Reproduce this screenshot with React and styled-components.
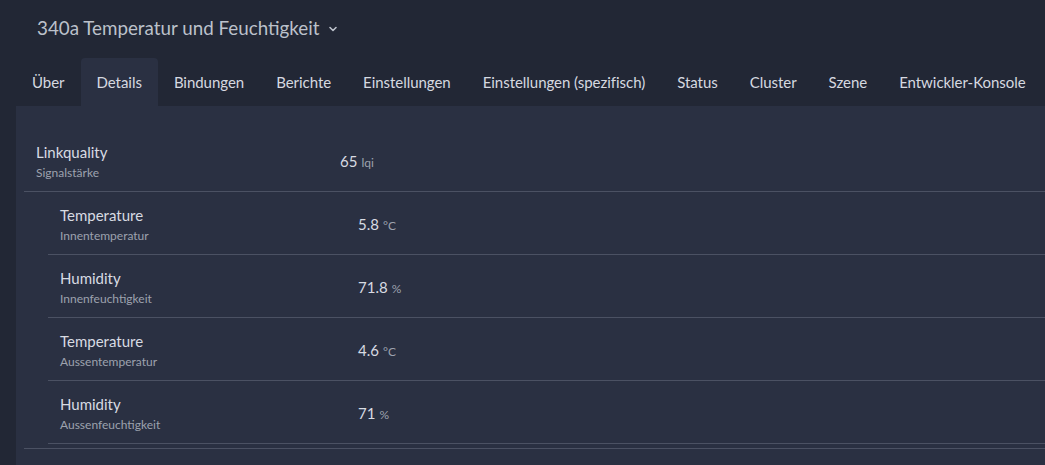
import styled, { createGlobalStyle } from "styled-components";

const GlobalStyle = createGlobalStyle`
  html, body {
    margin: 0;
    padding: 0;
    background: #222735;
    font-family: Lato, "Noto Sans", sans-serif;
    overflow: hidden;
  }
`;

const Page = styled.div`
  width: 1045px;
  height: 465px;
  background: #222735;
  color: #d3d6dd;
`;

const Header = styled.div`
  height: 58px;
  display: flex;
  align-items: center;
  padding-left: 37px;
  gap: 8px;
  box-sizing: border-box;
  padding-bottom: 4px;
`;

const Title = styled.h1`
  margin: 0;
  font-size: 18.8px;
  font-weight: 400;
  color: #bcc1cb;
`;

const Tabs = styled.div`
  display: flex;
  padding-left: 16px;
  height: 48px;
`;

const Tab = styled.div`
  padding: 0 16px;
  display: flex;
  align-items: center;
  font-size: 15px;
  letter-spacing: -0.04px;
  color: #d6d9e0;
  border-radius: 4px 4px 0 0;
  background: ${(p) => (p.active ? "#2a3042" : "transparent")};
  white-space: nowrap;
`;

const Panel = styled.div`
  margin-left: 16px;
  background: #2a3042;
  height: 359px;
  padding: 23px 0 0 8px;
  box-sizing: border-box;
`;

const Row = styled.div`
  display: flex;
  align-items: center;
  padding: 13px 12px 10px;
  border-bottom: 1px solid #4b5163;
`;

const Label = styled.div`
  width: ${(p) => p.width}px;
  display: flex;
  flex-direction: column;
  gap: 3px;
`;

const Name = styled.div`
  font-size: 15px;
  line-height: 20px;
  color: #d8dbe2;
`;

const Sub = styled.div`
  font-size: 12px;
  line-height: 16px;
  color: #9da2ae;
`;

const Value = styled.div`
  font-size: 15px;
  color: #d8dbe2;
  display: flex;
  align-items: baseline;
  gap: 4px;
  margin-bottom: 2px;
`;

const Unit = styled.span`
  font-size: 12px;
  color: #9da2ae;
`;

const Group = styled.div`
  padding-left: 24px;
  padding-bottom: 4px;
  border-bottom: 1px solid #4b5163;
`;

const tabs = [
  "Über",
  "Details",
  "Bindungen",
  "Berichte",
  "Einstellungen",
  "Einstellungen (spezifisch)",
  "Status",
  "Cluster",
  "Szene",
  "Entwickler-Konsole",
];

const sensors = [
  { name: "Temperature", sub: "Innentemperatur", value: "5.8", unit: "°C" },
  { name: "Humidity", sub: "Innenfeuchtigkeit", value: "71.8", unit: "%" },
  { name: "Temperature", sub: "Aussentemperatur", value: "4.6", unit: "°C" },
  { name: "Humidity", sub: "Aussenfeuchtigkeit", value: "71", unit: "%" },
];

const Chevron = () => (
  <svg width="10" height="10" viewBox="0 0 10 10" style={{ marginTop: 3 }}>
    <path d="M2 3.5 L5 6.5 L8 3.5" fill="none" stroke="#bcc1cb" strokeWidth="1.6" strokeLinecap="round" strokeLinejoin="round" />
  </svg>
);

export default function App() {
  return (
    <Page>
      <GlobalStyle />
      <Header>
        <Title>340a Temperatur und Feuchtigkeit</Title>
        <Chevron />
      </Header>
      <Tabs>
        {tabs.map((t) => (
          <Tab key={t} active={t === "Details"}>
            {t}
          </Tab>
        ))}
      </Tabs>
      <Panel>
        <Row>
          <Label width={304}>
            <Name>Linkquality</Name>
            <Sub>Signalstärke</Sub>
          </Label>
          <Value>
            65 <Unit>lqi</Unit>
          </Value>
        </Row>
        <Group>
          {sensors.map((s, i) => (
            <Row key={i}>
              <Label width={298}>
                <Name>{s.name}</Name>
                <Sub>{s.sub}</Sub>
              </Label>
              <Value>
                {s.value} <Unit>{s.unit}</Unit>
              </Value>
            </Row>
          ))}
        </Group>
      </Panel>
    </Page>
  );
}
